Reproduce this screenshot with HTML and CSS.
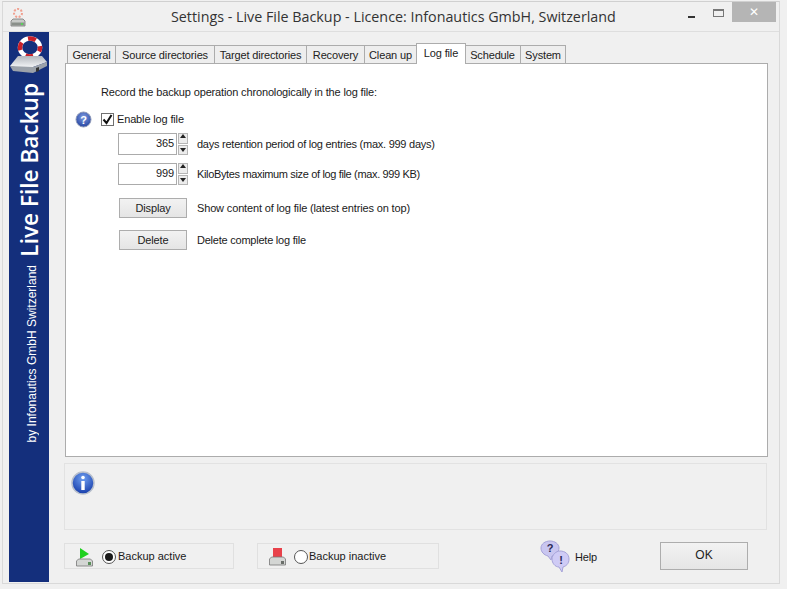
FILE: index.html
```html
<!DOCTYPE html>
<html lang="en">
<head>
<meta charset="utf-8">
<title>Settings - Live File Backup</title>
<link rel="stylesheet" href="styles.css">
</head>
<body>
<div class="window">
  <header class="titlebar">
    <svg class="app-icon" width="18" height="20" viewBox="0 0 18 20">
      <circle cx="9" cy="5" r="4" fill="none" stroke="#f0a090" stroke-width="2" stroke-dasharray="2 1.5"/>
      <path d="M2 13l2-2h10l2 2v5H2z" fill="#c8cac8" stroke="#777" stroke-width=".8"/>
      <rect x="2.500" y="14.500" width="13" height="3" fill="#8a8f8a"/>
      <rect x="12" y="15" width="2" height="2" fill="#5ad05a"/>
    </svg>
    <div class="title">Settings - Live File Backup - Licence: Infonautics GmbH, Switzerland</div>
    <div class="win-controls">
      <span class="ctl-min"></span>
      <span class="ctl-max"></span>
      <span class="ctl-close">✕</span>
    </div>
  </header>
  <div class="client">
    <aside class="sidebar">
      <svg class="logo" width="40" height="42" viewBox="0 0 40 42">
        <defs><linearGradient id="disk" x1="0" y1="0" x2="0" y2="1"><stop offset="0" stop-color="#b4b8be"/><stop offset="1" stop-color="#f2f3f5"/></linearGradient></defs>
        <ellipse cx="21" cy="15.500" rx="10" ry="9" fill="none" stroke="#fff" stroke-width="4.500"/>
        <ellipse cx="21" cy="15.500" rx="10" ry="9" fill="none" stroke="#c8202a" stroke-width="4.500" stroke-dasharray="8 7.500" stroke-dashoffset="4"/>
        <path d="M1 34L9 24H33L38 30 24 35H6z" fill="url(#disk)"/>
        <path d="M1 34L24 35 38 30V34L24 41 4 39z" fill="#9ca2aa"/>
        <path d="M27 36l3-1v4l-3 1z" fill="#333"/>
      </svg>
      <div class="brand">Live File Backup</div>
      <div class="by">by Infonautics GmbH Switzerland</div>
    </aside>
    <main class="main">
      <nav class="tabs">
        <span class="tab w-general">General</span>
        <span class="tab w-source">Source directories</span>
        <span class="tab w-target">Target directories</span>
        <span class="tab w-recovery">Recovery</span>
        <span class="tab w-clean">Clean up</span>
        <span class="tab active">Log file</span>
        <span class="tab w-schedule">Schedule</span>
        <span class="tab w-system">System</span>
      </nav>
      <section class="panel">
        <p class="intro">Record the backup operation chronologically in the log file:</p>
        <div class="enable-row">
          <svg class="help-dot" width="17" height="17" viewBox="0 0 17 17">
            <defs><radialGradient id="q" cx=".5" cy=".35" r=".7"><stop offset="0" stop-color="#7f9be0"/><stop offset="1" stop-color="#1f3f9e"/></radialGradient></defs>
            <circle cx="8.500" cy="8.500" r="7.500" fill="url(#q)" stroke="#8f9ab8"/>
            <text x="8.500" y="12.500" text-anchor="middle" class="dot-q">?</text>
          </svg>
          <span class="check">
            <svg width="11" height="11" viewBox="0 0 11 11"><path d="M1.500 5.500l3 3.500 5-8" fill="none" stroke="#111" stroke-width="2"/></svg>
          </span>
          <span>Enable log file</span>
        </div>
        <div class="spin-row">
          <span class="spin-input">365</span>
          <span class="spin-btns"><i class="up"></i><i class="down"></i></span>
          <span class="spin-label">days retention period of log entries (max. 999 days)</span>
        </div>
        <div class="spin-row second">
          <span class="spin-input">999</span>
          <span class="spin-btns"><i class="up"></i><i class="down"></i></span>
          <span class="spin-label">KiloBytes maximum size of log file (max. 999 KB)</span>
        </div>
        <div class="btn-row first">
          <button class="btn" type="button">Display</button>
          <span>Show content of log file (latest entries on top)</span>
        </div>
        <div class="btn-row last">
          <button class="btn" type="button">Delete</button>
          <span>Delete complete log file</span>
        </div>
      </section>
      <section class="info">
        <svg width="24" height="24" viewBox="0 0 24 24">
          <defs><radialGradient id="i" cx=".5" cy=".3" r=".75"><stop offset="0" stop-color="#6f9ff0"/><stop offset="1" stop-color="#0f35a5"/></radialGradient></defs>
          <circle cx="12" cy="12" r="11" fill="url(#i)" stroke="#b9c0cc" stroke-width="1.500"/>
          <circle cx="12" cy="6.500" r="1.800" fill="#fff"/>
          <rect x="10.300" y="10" width="3.400" height="9" fill="#fff"/>
        </svg>
      </section>
      <footer class="statusbar">
        <div class="state active-state">
          <svg width="17" height="20" viewBox="0 0 17 20">
            <path d="M4 1l9 6-9 5z" fill="#1fd01f"/>
            <path d="M0.500 14l2-2h12l2 2v5H0.500z" fill="#d4d6d4" stroke="#777" stroke-width=".8"/>
            <rect x="12" y="15" width="3" height="3" fill="#5a8f5a"/>
          </svg>
          <span class="radio on"></span>
          <span>Backup active</span>
        </div>
        <div class="state inactive-state">
          <svg width="17" height="20" viewBox="0 0 17 20">
            <rect x="4" y="1" width="9" height="10" fill="#e8414a"/>
            <path d="M0.500 12l2-2h12l2 2v6H0.500z" fill="#d4d6d4" stroke="#777" stroke-width=".8"/>
            <rect x="12" y="14" width="3" height="3" fill="#6a6f6a"/>
          </svg>
          <span class="radio"></span>
          <span>Backup inactive</span>
        </div>
        <div class="help">
          <svg width="32" height="33" viewBox="0 0 32 33">
            <path d="M10 1c5 0 9 3 9 7s-4 8-7 8l-1 4-3-4C4 15 1 12 1 8s4-7 9-7z" fill="#c9c6f0" stroke="#a5a2d8"/>
            <path d="M20 11c5 0 9 3 9 8s-3 7-6 8l-1 5-3-5c-4 0-7-4-7-8s4-8 8-8z" fill="#cfcbf5" stroke="#a5a2d8"/>
            <text x="10" y="12" text-anchor="middle" class="help-mark">?</text>
            <text x="21" y="24" text-anchor="middle" class="help-mark">!</text>
          </svg>
          <span>Help</span>
        </div>
        <button class="ok" type="button">OK</button>
      </footer>
    </main>
  </div>
</div>
</body>
</html>
```
FILE: styles.css
```css
* { box-sizing: border-box; }
html, body { margin: 0; height: 100%; background: #f0f0f0; }
body { font: 11px/15px "Liberation Sans", Arial, sans-serif; letter-spacing: -0.15px; color: #1a1a1a; overflow: hidden; }
.window {
  width: 778px; height: 583px; margin: 1px 0 0 2px;
  border: 1px solid #d9d9d9; border-top-color: #d0d0d0;
  display: flex; flex-direction: column; background: #f0f0f0;
}
.titlebar { height: 30px; flex: none; display: flex; align-items: center; position: relative; border-bottom: 1px solid #dedede; }
.app-icon { margin-left: 6px; margin-top: 2px; }
.title { position: absolute; left: 168px; top: 5px; font: 14.300px/20px "Open Sans", sans-serif; letter-spacing: 0; color: #333; white-space: nowrap; }
.win-controls { position: absolute; left: 685px; top: 0; display: flex; align-items: flex-start; }
.ctl-min { width: 7px; height: 2px; background: #333; margin-top: 14px; }
.ctl-max { width: 11px; height: 8px; border: 1px solid #777; border-top-width: 2px; margin: 7px 0 0 18px; }
.ctl-close { width: 44px; height: 20px; background: #b5b5b5; color: #fff; margin: 0 0 0 8px; text-align: center; font: 12px/20px "DejaVu Sans", sans-serif; letter-spacing: 0; }
.client { flex: 1; display: flex; padding-left: 6px; padding-bottom: 1px; }
.sidebar { width: 40px; background: #142f7c; flex: none; display: flex; flex-direction: column; align-items: center; color: #fff; letter-spacing: 0; }
.logo { margin-top: 0; flex: none; }
.brand { writing-mode: vertical-rl; transform: rotate(180deg); font: 600 22.600px/26px "Open Sans", sans-serif; margin: 9px 0 0 2px; white-space: nowrap; }
.by { writing-mode: vertical-rl; transform: rotate(180deg); font: 12px/16px "Liberation Sans", sans-serif; margin: 8px 0 0 5px; white-space: nowrap; }
.main { flex: 1; display: flex; flex-direction: column; padding-left: 15px; padding-top: 11px; }
.tabs { display: flex; height: 21px; padding-left: 3px; align-items: flex-end; position: relative; z-index: 1; margin-bottom: -1px; }
.tab { height: 19px; padding-top: 2px; text-align: center; border: 1px solid #acacac; border-left-width: 0; background: #eeeeee; white-space: nowrap; color: #222; }
.tab:first-child { border-left-width: 1px; }
.tab.active { height: 21px; width: 50px; margin-left: -1px; border: 1px solid #acacac; border-bottom: 0; background: #fff; padding-top: 2px; margin-right: -1px; position: relative; }
.w-general { width: 49px; } .w-source { width: 99px; } .w-target { width: 92px; } .w-recovery { width: 58px; }
.w-clean { width: 52px; } .w-schedule { width: 56px; } .w-system { width: 45px; }
.panel { height: 394px; width: 703px; margin-left: 1px; background: #fff; border: 1px solid #acacac; padding: 21px 0 0 35px; flex: none; }
.intro { margin: 0; height: 15px; }
.enable-row { display: flex; align-items: center; height: 17px; margin: 11px 0 0 -26px; }
.help-dot { flex: none; }
.dot-q { font: 700 11px "Liberation Sans", sans-serif; fill: #fff; }
.check { width: 13px; height: 13px; border: 1px solid #707070; background: #fff; margin: 0 3px 0 9px; display: flex; align-items: center; justify-content: center; }
.spin-row { display: flex; align-items: center; height: 22px; margin: 5px 0 0 17px; }
.spin-row.second { margin-top: 8px; }
.spin-input { width: 59px; height: 22px; border: 1px solid #ababab; text-align: right; padding: 2px 2px 0 0; background: #fff; }
.spin-btns { width: 10px; height: 22px; margin-left: 1px; display: flex; flex-direction: column; gap: 1px; }
.spin-btns i { flex: 1; background: #ececec; border: 1px solid #b5b5b5; position: relative; }
.up::after, .down::after { content: ""; position: absolute; left: 1px; border: 3px solid transparent; }
.up::after { top: 0; border-top-width: 0; border-bottom: 4px solid #222; }
.down::after { top: 2px; border-bottom-width: 0; border-top: 4px solid #222; }
.spin-label { margin-left: 9px; letter-spacing: -0.25px; }
.second .spin-label { letter-spacing: -0.35px; }
.btn-row { display: flex; align-items: center; height: 20px; margin: 12px 0 0 18px; }
.btn-row.first { margin-top: 13px; }
.btn-row.last span { letter-spacing: -0.23px; }
.btn { width: 68px; height: 20px; padding: 0; margin-right: 10px; border: 1px solid #adadad; background: linear-gradient(#f2f2f2, #e5e5e5); font: inherit; letter-spacing: inherit; color: #222; }
.info { width: 703px; height: 67px; margin-top: 6px; border: 1px solid #e2e2e2; padding: 7px 0 0 6px; flex: none; }
.info svg { display: block; }
.statusbar { display: flex; align-items: flex-start; margin-top: 13px; position: relative; letter-spacing: 0; }
.state { height: 26px; border: 1px solid #e0e0e0; display: flex; align-items: center; padding-top: 1px; }
.state svg { flex: none; margin-left: 11px; }
.active-state { width: 170px; }
.active-state .radio { margin-left: 9px; }
.inactive-state { width: 182px; margin-left: 23px; }
.inactive-state .radio { margin-left: 8px; margin-right: 1px; }
.radio { width: 14px; height: 14px; border: 1px solid #555; border-radius: 50%; background: #fff; margin-right: 2px; display: flex; align-items: center; justify-content: center; flex: none; }
.radio.on::after { content: ""; width: 8px; height: 8px; border-radius: 50%; background: #1a1a1a; }
.help { display: flex; align-items: center; margin: -4px 0 0 101px; height: 34px; gap: 3px; width: 60px; flex: none; letter-spacing: -0.15px; }
.help > span { padding-top: 2px; }
.help-mark { font: 700 11px "Liberation Sans", sans-serif; fill: #2a2a55; }
.ok { width: 88px; height: 28px; padding: 0 0 2px; margin: -1px 0 0 60px; border: 1px solid #adadad; background: linear-gradient(#f2f2f2, #e5e5e5); font: inherit; font-size: 12px; letter-spacing: 0; color: #222; flex: none; }
```
